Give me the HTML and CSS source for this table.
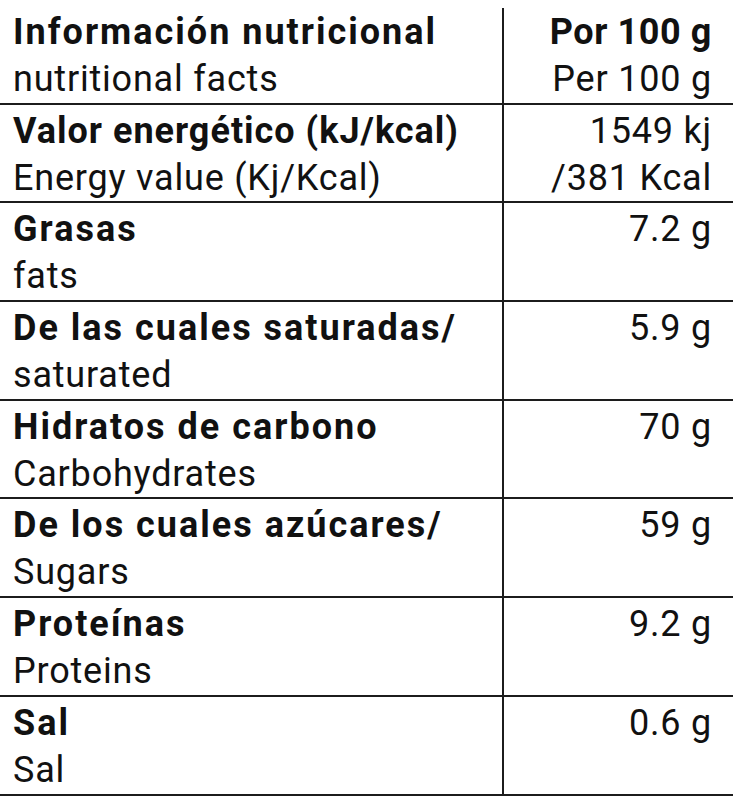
FILE: index.html
```html
<!DOCTYPE html>
<html lang="es">
<head>
<meta charset="utf-8">
<title>Información nutricional</title>
<link rel="stylesheet" href="styles.css">
</head>
<body>
<div class="table">
  <div class="row">
    <div class="cell label"><div class="es">Información nutricional</div><div class="en">nutritional facts</div></div>
    <div class="cell value"><div class="es">Por 100 g</div><div class="en">Per 100 g</div></div>
  </div>
  <div class="row">
    <div class="cell label"><div class="es tight">Valor energético (kJ/kcal)</div><div class="en">Energy value (Kj/Kcal)</div></div>
    <div class="cell value"><div class="en">1549 kj</div><div class="en">/381 Kcal</div></div>
  </div>
  <div class="row">
    <div class="cell label"><div class="es">Grasas</div><div class="en">fats</div></div>
    <div class="cell value"><div class="en">7.2 g</div></div>
  </div>
  <div class="row">
    <div class="cell label"><div class="es">De las cuales saturadas/</div><div class="en">saturated</div></div>
    <div class="cell value"><div class="en">5.9 g</div></div>
  </div>
  <div class="row">
    <div class="cell label"><div class="es">Hidratos de carbono</div><div class="en">Carbohydrates</div></div>
    <div class="cell value"><div class="en">70 g</div></div>
  </div>
  <div class="row">
    <div class="cell label"><div class="es">De los cuales azúcares/</div><div class="en">Sugars</div></div>
    <div class="cell value"><div class="en">59 g</div></div>
  </div>
  <div class="row">
    <div class="cell label"><div class="es">Proteínas</div><div class="en">Proteins</div></div>
    <div class="cell value"><div class="en">9.2 g</div></div>
  </div>
  <div class="row">
    <div class="cell label"><div class="es">Sal</div><div class="en">Sal</div></div>
    <div class="cell value"><div class="en">0.6 g</div></div>
  </div>
</div>
</body>
</html>
```
FILE: styles.css
```css
html, body {
  margin: 0;
  padding: 0;
  background: #ffffff;
}
body {
  font-family: Roboto, "Liberation Sans", sans-serif;
  color: #111111;
}
.table {
  width: 733px;
  padding-top: 6px;
}
.row {
  display: grid;
  grid-template-columns: 504px 1fr;
  height: 98.7px;
  box-sizing: border-box;
  border-bottom: 2px solid #1c1c1c;
}
.cell {
  padding-top: 3px;
  font-size: 36px;
  line-height: 47px;
  letter-spacing: 0.8px;
}
.label {
  padding-left: 13px;
  border-right: 2px solid #1c1c1c;
}
.value {
  text-align: right;
  padding-right: 21px;
}
.es {
  font-weight: 700;
  letter-spacing: 2px;
}
.value .es {
  letter-spacing: 0.6px;
}
.es.tight {
  letter-spacing: 1px;
}
.en {
  font-weight: 400;
}
.row:first-child .label {
  margin-top: 2px;
  padding-top: 1px;
}
```
